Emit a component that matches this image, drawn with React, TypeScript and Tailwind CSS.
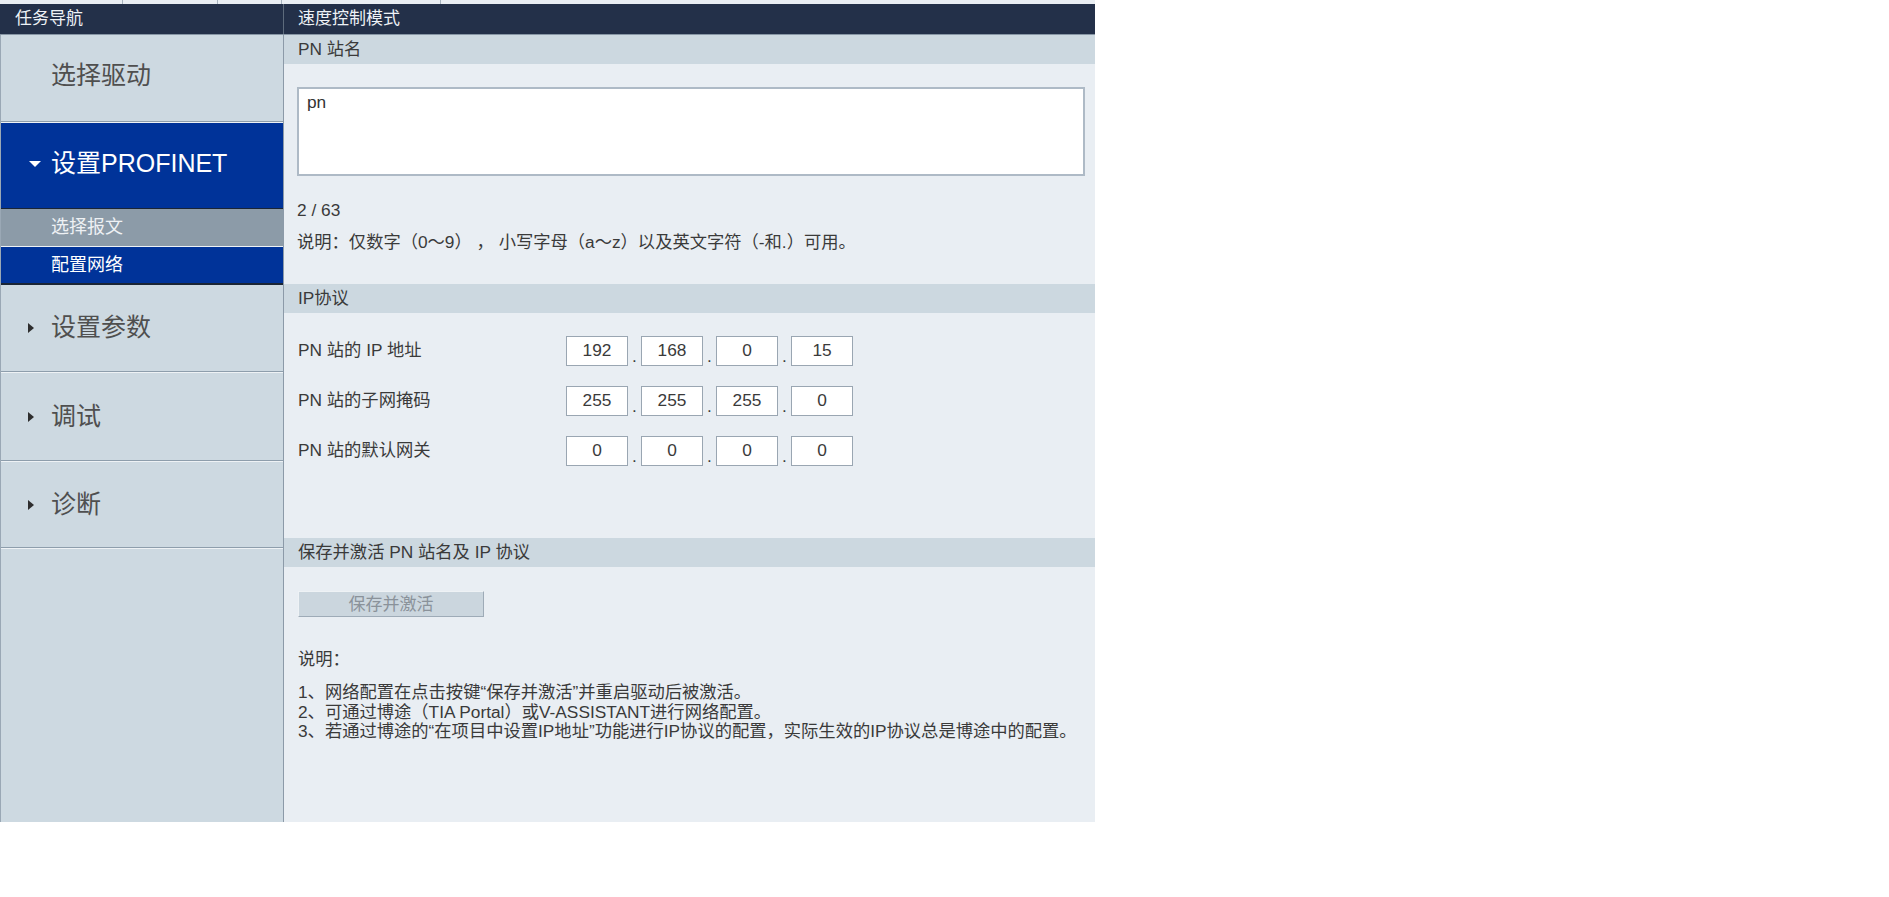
const font = { fontFamily: '"Liberation Sans", "Noto Sans CJK SC", sans-serif' };

const mainItems = [
  { label: "设置参数", h: "h-[86px]" },
  { label: "调试", h: "h-[87px]" },
  { label: "诊断", h: "h-[85px]" },
];

const ipRows = [
  { label: "PN 站的 IP 地址", parts: ["192", "168", "0", "15"] },
  { label: "PN 站的子网掩码", parts: ["255", "255", "255", "0"] },
  { label: "PN 站的默认网关", parts: ["0", "0", "0", "0"] },
];

const notes = [
  "1、网络配置在点击按键\u201c保存并激活\u201d并重启驱动后被激活。",
  "2、可通过博途（TIA Portal）或V-ASSISTANT进行网络配置。",
  "3、若通过博途的\u201c在项目中设置IP地址\u201d功能进行IP协议的配置，实际生效的IP协议总是博途中的配置。",
];

const RightArrow = () => (
  <svg width="6" height="10" viewBox="0 0 6 10" className="shrink-0">
    <polygon points="0,0 6,5 0,10" fill="#2e2e2e" />
  </svg>
);

const DownArrow = () => (
  <svg width="12" height="6" viewBox="0 0 12 6" className="shrink-0">
    <polygon points="0,0 12,0 6,6" fill="#ffffff" />
  </svg>
);

const Sep = () => (
  <div className="h-[2px] border-t border-[#8e9eac] bg-[#eef2f5]" />
);

const SectionHeader = ({ children }: { children: React.ReactNode }) => (
  <div className="h-[29px] bg-[#ccd8e0] pl-[14px] flex items-center text-[17.3px] text-[#3a3a3a]">
    {children}
  </div>
);

const App = () => {
  return (
    <div className="w-[1889px] h-[897px] bg-white" style={font}>
      <div className="w-[1095px]">
        {/* leftover strip from the tab row above */}
        <div className="h-[4px] flex bg-[#e9eef3]">
          <div className="w-[123px] border-r border-[#a7b3be]" />
          <div className="w-[95px] border-r border-[#a7b3be]" />
          <div className="w-[64px] border-r border-[#a7b3be]" />
          <div className="w-[159px] border-r border-[#a7b3be]" />
          <div className="flex-1" />
        </div>

        <div className="h-[31px] flex bg-[#233049] border-b border-[#8796a5] text-[17px] text-[#eef2f6]">
          <div className="w-[284px] border-r border-[#5d6b7c] pl-[15px] flex items-center">任务导航</div>
          <div className="flex-1 pl-[14px] flex items-center">速度控制模式</div>
        </div>

        <div className="flex h-[787px]">
          <nav className="w-[284px] bg-[#cdd9e1] border-l border-[#9aa8b5] border-r border-r-[#8c9aa8] flex flex-col">
            <div className="h-[86px] flex items-center pl-[50px] pb-[5px] text-[25px] text-[#4f4f4f]">选择驱动</div>
            <Sep />
            <div className="h-[86px] bg-[#003399] flex items-center gap-[10px] pl-[28px] pb-[4px] text-[25px] text-white border-b border-[#1a2535]">
              <DownArrow />
              <span>设置PROFINET</span>
            </div>
            <div className="h-[38px] bg-[#8c9ba8] flex items-center pl-[50px] text-[18px] text-[#eef1f4] border-b border-[#eef2f5]">选择报文</div>
            <div className="h-[38px] bg-[#003399] flex items-center pl-[50px] text-[18px] text-white border-b-2 border-[#1a2535]">配置网络</div>
            {mainItems.map((item) => (
              <div key={item.label}>
                <div className={`${item.h} flex items-center gap-[17px] pl-[27px] text-[25px] text-[#4f4f4f]`}>
                  <RightArrow />
                  <span>{item.label}</span>
                </div>
                <Sep />
              </div>
            ))}
          </nav>

          <main className="flex-1 bg-[#e9eef3] text-[17.3px] text-[#3a3a3a]">
            <SectionHeader>PN 站名</SectionHeader>
            <div className="pt-[23px] pl-[13px] pr-[10px]">
              <div className="h-[89px] bg-white border-2 border-[#aebac6] px-[8px] pt-[3px] leading-[20px] text-[#333]">pn</div>
              <div className="mt-[24px] leading-[20px]">2 / 63</div>
              <div className="mt-[12px] leading-[20px]">说明：仅数字（0～9）&nbsp;，&nbsp;小写字母（a～z）以及英文字符（-和.）可用。</div>
            </div>

            <div className="mt-[32px]">
              <SectionHeader>IP协议</SectionHeader>
            </div>
            <div className="pt-[23px] pl-[14px] flex flex-col gap-[20px]">
              {ipRows.map((row) => (
                <div key={row.label} className="flex items-center h-[30px]">
                  <div className="w-[268px]">{row.label}</div>
                  <div className="flex items-end">
                    {row.parts.map((p, i) => (
                      <div key={i} className="flex items-end">
                        {i > 0 && <span className="w-[13px] text-center leading-[20px]">.</span>}
                        <div className="w-[62px] h-[30px] bg-white border border-[#9aa6b2] flex items-center justify-center">{p}</div>
                      </div>
                    ))}
                  </div>
                </div>
              ))}
            </div>

            <div className="mt-[72px]">
              <SectionHeader>保存并激活 PN 站名及 IP 协议</SectionHeader>
            </div>
            <div className="pt-[24px] pl-[14px]">
              <button className="w-[186px] h-[26px] bg-[#cbd6de] border border-t-[#eef2f5] border-l-[#eef2f5] border-r-[#9eabb7] border-b-[#9eabb7] text-[17px] text-[#8a929a] leading-none">
                保存并激活
              </button>
              <div className="mt-[32px] leading-[20px]">说明：</div>
              <div className="mt-[14px] leading-[19.5px]">
                {notes.map((n) => (
                  <div key={n}>{n}</div>
                ))}
              </div>
            </div>
          </main>
        </div>
      </div>
    </div>
  );
};

export default App;
